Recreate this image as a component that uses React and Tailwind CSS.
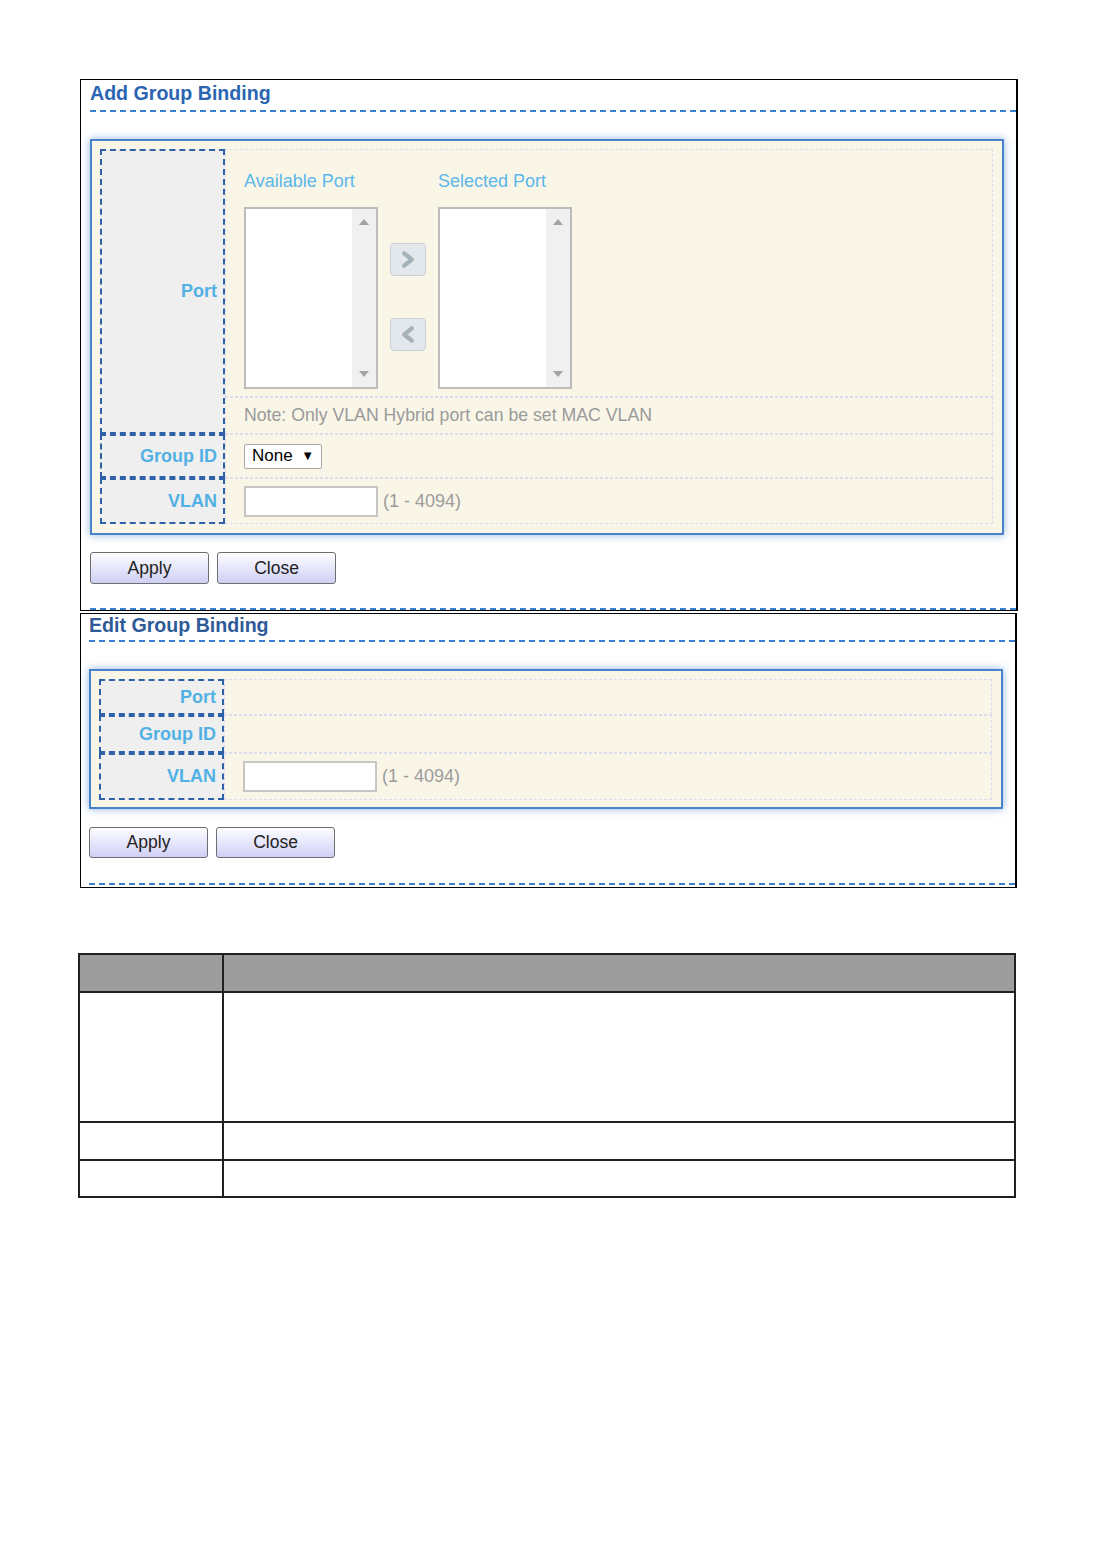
import React from "react";

// shared class strings for the form grid
const LABEL =
  "flex items-center justify-end pr-[6px] border-2 border-dashed border-[#2d62a8] bg-[#efefef] text-[18px] font-bold text-[#52b1e4]";
const CELL = "border border-dashed border-[#dcdcef]";
const BTN =
  "h-full rounded-[3px] border border-[#6e6e6e] bg-linear-to-b from-[#fdfdff] to-[#cfd0f5] text-[17.5px] text-[#222] flex items-center justify-center";

const UpTri = () => (
  <svg width="10" height="6" viewBox="0 0 10 6">
    <polygon points="5,0 10,6 0,6" fill="#a3a3a3" />
  </svg>
);

const DownTri = () => (
  <svg width="10" height="6" viewBox="0 0 10 6">
    <polygon points="0,0 10,0 5,6" fill="#a3a3a3" />
  </svg>
);

const ListBox = () => (
  <div className="w-[134px] h-[182px] border-2 border-[#bcbcbc] bg-white flex justify-end">
    <div className="w-[24px] h-full bg-[#f0f0f0] flex flex-col items-center justify-between pt-[10px] pb-[10px]">
      <UpTri />
      <DownTri />
    </div>
  </div>
);

const MoveBtn = ({ dir }) => (
  <div className="w-[36px] h-[33px] rounded-[4px] border border-[#c8cfd5] bg-[#e3e8ec] flex items-center justify-center">
    <svg width="36" height="33" viewBox="0 0 36 33">
      {dir === "right" ? (
        <polyline
          points="14,10 22,16.5 14,23"
          fill="none"
          stroke="#a6b2ba"
          strokeWidth="4.5"
          strokeLinecap="round"
          strokeLinejoin="round"
        />
      ) : (
        <polyline
          points="22,10 14,16.5 22,23"
          fill="none"
          stroke="#a6b2ba"
          strokeWidth="4.5"
          strokeLinecap="round"
          strokeLinejoin="round"
        />
      )}
    </svg>
  </div>
);

const VlanInput = () => (
  <div className="flex items-center pl-[18px]">
    <div className="w-[134px] h-[31px] border-2 border-[#c6c6c6] bg-white" />
    <span className="ml-[5px] text-[18px] text-[#9c9c9c]">(1 - 4094)</span>
  </div>
);

const Buttons = ({ h }) => (
  <div className={`flex gap-[8px] ${h}`}>
    <div className="w-[119px] h-full">
      <div className={BTN}>Apply</div>
    </div>
    <div className="w-[119px] h-full">
      <div className={BTN}>Close</div>
    </div>
  </div>
);

const AddPanel = () => (
  <div className="ml-[80px] w-[938px] border border-black border-r-2">
    <div className="ml-[9px]">
      <div className="h-[32px] border-b-2 border-dashed border-[#3c7ecf] text-[19.6px] font-bold leading-[26px] text-[#2b65b2]">
        Add Group Binding
      </div>

      <div className="mt-[27px] mr-[12px] h-[396px] border-2 border-[#4783cc] bg-[#f9f6e8] shadow-[0_0_8px_rgba(70,130,205,0.6)] pl-[8px] pr-[9px] pt-[8px]">
        <div className="grid grid-cols-[125px_1fr] grid-rows-[248px_37px_44px_46px]">
          <div className={`${LABEL} row-span-2`}>Port</div>
          <div className={`${CELL} pl-[18px] pt-[21px]`}>
            <div className="flex text-[18px] leading-[20px] text-[#5cb7ea]">
              <span className="w-[194px]">Available Port</span>
              <span>Selected Port</span>
            </div>
            <div className="flex items-start mt-[16px]">
              <ListBox />
              <div className="ml-[12px] mt-[36px] flex flex-col gap-[42px]">
                <MoveBtn dir="right" />
                <MoveBtn dir="left" />
              </div>
              <div className="ml-[12px]">
                <ListBox />
              </div>
            </div>
          </div>
          <div className={`${CELL} flex items-center pl-[18px] text-[17.7px] text-[#9a9a9a]`}>
            Note: Only VLAN Hybrid port can be set MAC VLAN
          </div>

          <div className={LABEL}>Group ID</div>
          <div className={`${CELL} flex items-center pl-[18px]`}>
            <div className="w-[78px] h-[25px] border border-[#a8a8a8] rounded-[2px] bg-white flex items-center justify-between pl-[7px] pr-[7px] text-[17px] text-black">
              <span>None</span>
              <span className="text-[13px]">▼</span>
            </div>
          </div>

          <div className={LABEL}>VLAN</div>
          <div className={`${CELL} flex items-center`}>
            <VlanInput />
          </div>
        </div>
      </div>

      <div className="mt-[17px]">
        <Buttons h="h-[32px]" />
      </div>

      <div className="mt-[24px] border-t-2 border-dashed border-[#3c7ecf]" />
    </div>
  </div>
);

const EditPanel = () => (
  <div className="ml-[80px] mt-[2px] w-[937px] border border-black border-r-2">
    <div className="ml-[8px]">
      <div className="h-[28px] border-b-2 border-dashed border-[#3c7ecf] text-[19.6px] font-bold leading-[22px] text-[#2f5a98]">
        Edit Group Binding
      </div>

      <div className="mt-[27px] mr-[12px] h-[140px] border-2 border-[#4783cc] bg-[#f9f6e8] shadow-[0_0_8px_rgba(70,130,205,0.6)] pl-[8px] pr-[9px] pt-[8px]">
        <div className="grid grid-cols-[125px_1fr] grid-rows-[36px_38px_47px]">
          <div className={LABEL}>Port</div>
          <div className={CELL} />
          <div className={LABEL}>Group ID</div>
          <div className={CELL} />
          <div className={LABEL}>VLAN</div>
          <div className={`${CELL} flex items-center`}>
            <VlanInput />
          </div>
        </div>
      </div>

      <div className="mt-[18px]">
        <Buttons h="h-[31px]" />
      </div>

      <div className="mt-[25px] border-t-2 border-dashed border-[#3c7ecf]" />
      <div className="h-[2px]" />
    </div>
  </div>
);

const ParamTable = () => (
  <table className="ml-[78px] mt-[65px] w-[938px] border-collapse">
    <tbody>
      <tr className="bg-[#9d9d9d]">
        <td className="w-[144px] h-[38px] border-2 border-[#231f20]" />
        <td className="h-[38px] border-2 border-[#231f20]" />
      </tr>
      <tr>
        <td className="h-[130px] border-2 border-[#231f20]" />
        <td className="h-[130px] border-2 border-[#231f20]" />
      </tr>
      <tr>
        <td className="h-[38px] border-2 border-[#231f20]" />
        <td className="h-[38px] border-2 border-[#231f20]" />
      </tr>
      <tr>
        <td className="h-[37px] border-2 border-[#231f20]" />
        <td className="h-[37px] border-2 border-[#231f20]" />
      </tr>
    </tbody>
  </table>
);

export default function App() {
  return (
    <div className="w-[1094px] min-h-[1545px] bg-white pt-[79px] font-['Liberation_Sans',Arial,sans-serif]">
      <AddPanel />
      <EditPanel />
      <ParamTable />
    </div>
  );
}
